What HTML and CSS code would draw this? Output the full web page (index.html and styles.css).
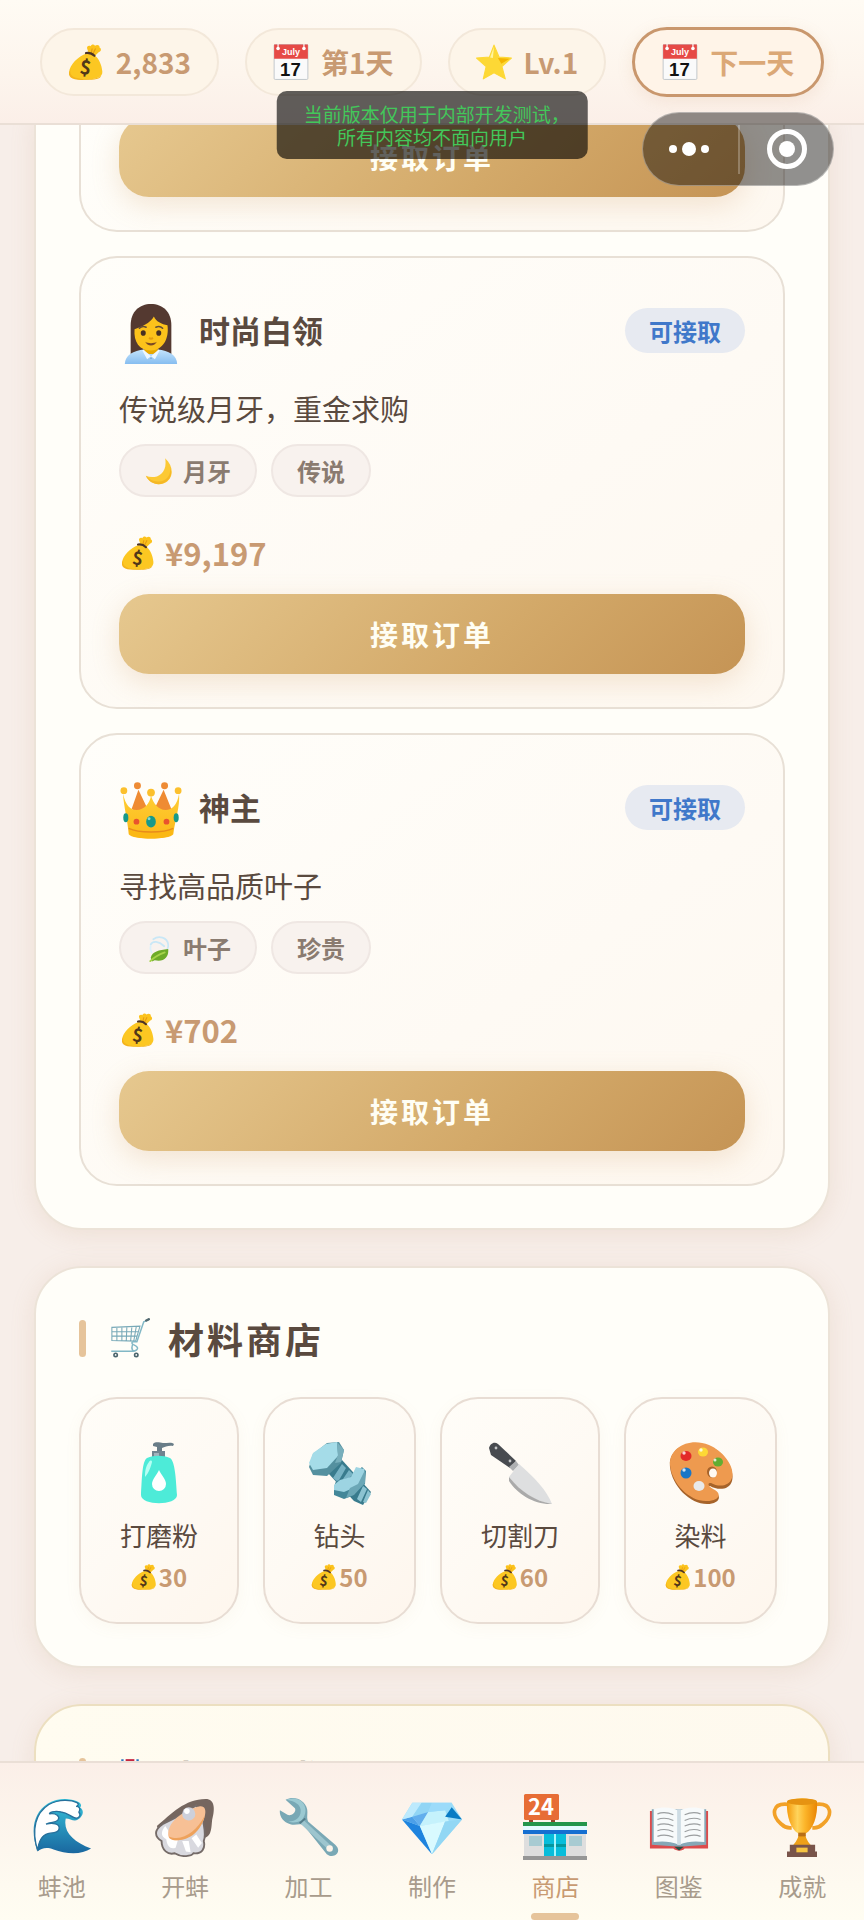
FILE: index.html
```html
<!DOCTYPE html>
<html lang="zh-CN">
<head>
<meta charset="utf-8">
<meta name="viewport" content="width=device-width, initial-scale=1">
<title>材料商店</title>
<link rel="stylesheet" href="styles.css">
</head>
<body>
<svg class="paints" aria-hidden="true">
  <defs>
    <linearGradient id="g-shirt" x1="0" y1="0" x2="0" y2="1"><stop offset="0" stop-color="#c4e4fc"/><stop offset="1" stop-color="#86bdf0"/></linearGradient>
    <linearGradient id="g-wave" x1="0" y1="0" x2="0" y2="1"><stop offset="0" stop-color="#35c4dc"/><stop offset="1" stop-color="#1a679f"/></linearGradient>
    <linearGradient id="g-cup" x1="0" y1="0" x2="1" y2="0"><stop offset="0" stop-color="#f59a0c"/><stop offset=".35" stop-color="#ffd45c"/><stop offset=".6" stop-color="#fcb52a"/><stop offset="1" stop-color="#e98504"/></linearGradient>
    <linearGradient id="g-crown" x1="0" y1="0" x2="0" y2="1"><stop offset="0" stop-color="#ffce35"/><stop offset="1" stop-color="#fbb718"/></linearGradient>
  </defs>
</svg>
<svg class="sprite" aria-hidden="true">
  <symbol id="money" viewBox="0 0 64 64">
    <path d="M37 17l-3-9c-1-4 3-6 6-4 2-4 6-4 8-1 4-3 9-1 8 3 4 2 3 7-1 8l-7 7z" fill="#fcc21b"/>
    <path d="M43 8l-2 9M49 8l-5 10" stroke="#e59a12" stroke-width="2" fill="none"/>
    <path d="M33 17C18 22 3 37 2 50c-1 10 11 13 29 13 20 0 31-4 30-14-1-12-6-24-15-30z" fill="#fcc722"/>
    <path d="M6 41C3 48 2 57 14 60c12 4 39 4 45-4-1 6-11 8-29 8C11 64 0 61 2 50z" fill="#f4b41c"/>
    <path d="M32 16c6-1 11 1 15 5" stroke="#4e3426" stroke-width="4" stroke-linecap="round" fill="none"/>
    <text x="31" y="54" font-size="34" font-weight="700" text-anchor="middle" fill="#513719" transform="rotate(8 31 44)">$</text>
  </symbol>
  <symbol id="calendar" viewBox="0 0 64 64">
    <rect x="2" y="1" width="60" height="62" rx="2" fill="#fafafa" stroke="#b8bfc5" stroke-width="1.5"/>
    <path d="M2 1h60v25H2z" fill="#e64a46"/>
    <circle cx="9" cy="8" r="3.2" fill="#fff"/><circle cx="55" cy="8" r="3.2" fill="#fff"/>
    <path d="M9 7V0M55 7V0" stroke="#fff" stroke-width="2"/>
    <text x="32" y="20" font-size="16" font-weight="700" text-anchor="middle" fill="#fff" class="latin">July</text>
    <text x="31" y="57" font-size="33" font-weight="700" text-anchor="middle" fill="#111" class="latin">17</text>
  </symbol>
  <symbol id="star" viewBox="0 0 64 64">
    <path d="M32 2l9 21 22 2-17 15 6 22-20-11-19 11 5-22L1 25l23-2z" fill="#fdd835" stroke="#fdd835" stroke-width="2" stroke-linejoin="round"/>
    <path d="M32 5l-2 20-5-1z" fill="#fff59d"/><path d="M60 26L45 35l-6-10z" fill="#f4b400"/>
  </symbol>
  <symbol id="woman" viewBox="0 0 64 64">
    <path d="M11 55V23C11 9 20 1 32 1s21 8 21 22v32z" fill="#543930"/>
    <path d="M5 63c0-9 9-14 20-15h14c11 1 20 6 20 15z" fill="url(#g-shirt)"/>
    <path d="M25 45h14v4c-3 5-11 5-14 0z" fill="#e7a800"/>
    <path d="M24 48l8 7-4 3-5-9zm16 0l-8 7 4 3 5-9z" fill="#edf7ff"/>
    <path d="M15 27c7-2 16-6 20-13 2 5 8 8 14 9 2 14-5 26-17 26S14 40 15 27z" fill="#fcc21b"/>
    <path d="M20 26c2-2 5-2 7-1M37 25c2-1 5-1 7 1" stroke="#604c3a" stroke-width="1.6" fill="none" stroke-linecap="round"/>
    <ellipse cx="24" cy="31" rx="2.6" ry="2.9" fill="#483022"/><ellipse cx="40" cy="31" rx="2.6" ry="2.9" fill="#483022"/>
    <path d="M30 36q2 1.600 4 0" stroke="#e39c10" stroke-width="2" fill="none"/>
    <path d="M26 40c3 2 9 2 12 0-2 5-10 5-12 0z" fill="#7b4a25"/>
    <circle cx="32" cy="57" r=".8" fill="#6d9fca"/>
  </symbol>
  <symbol id="crown" viewBox="0 0 64 64">
    <path d="M19 10l-7 20 9 5 8-4zM45 10l8 20-9 5-9-4z" fill="#ef8b32"/>
    <path d="M3 14c3 13 8 17 14 17 8 0 14-7 15-15 2 8 8 15 15 15s12-5 14-17c1 14-4 27-6 42-4 6-42 6-46 0C8 43 4 28 3 14z" fill="url(#g-crown)"/>
    <path d="M9 50c10 5 36 5 46 0l-1 6c-8 6-36 6-44 0z" fill="#fbb814"/><path d="M9 50c10 5 36 5 46 0" stroke="#e88b1b" stroke-width="1.500" fill="none"/>
    <g fill="#fcc02d"><circle cx="4" cy="11" r="3.500"/><circle cx="60" cy="11" r="3.500"/><circle cx="32" cy="13" r="4"/></g>
    <circle cx="18" cy="6" r="3.600" fill="#ee8b35"/><circle cx="46" cy="6" r="3.600" fill="#ee8b35"/>
    <ellipse cx="32" cy="43" rx="5" ry="6" fill="#17998a"/><ellipse cx="6" cy="39" rx="2.600" ry="4.600" fill="#17998a"/><ellipse cx="58" cy="39" rx="2.600" ry="4.600" fill="#17998a"/>
    <circle cx="17" cy="43" r="3" fill="#e9532d"/><circle cx="48" cy="43" r="3" fill="#e9532d"/><circle cx="30" cy="40" r="1.500" fill="#8adacc"/>
  </symbol>
  <symbol id="moon" viewBox="0 0 64 64">
    <path d="M46 3c22 20 19 48-3 57C27 66 10 59 2 43c20 9 51-2 44-40z" fill="#fcc934"/>
    <path d="M57 22c4 18-8 33-25 34-12 1-22-4-30-13 7 16 24 23 40 17 16-7 22-22 15-38z" fill="#f5b825"/>
  </symbol>
  <symbol id="leaf" viewBox="0 0 64 64">
    <path d="M19 12c12-9 32-5 34 12 1 6-1 10-3 13M13 24c5-9 18-8 31 4" stroke="#c9e7f6" stroke-width="4" fill="none" stroke-linecap="round"/>
    <path d="M13 27c-2 6-1 10 2 15" stroke="#dcf0fa" stroke-width="4" fill="none" stroke-linecap="round"/>
    <path d="M13 54c4-15 18-17 40-20 2 17-8 31-31 26l-6 3z" fill="#6dab28"/><path d="M12 62c11-11 22-16 33-20" stroke="#a5d34a" stroke-width="4" fill="none" stroke-linecap="round"/>
  </symbol>
  <symbol id="cart" viewBox="0 0 64 64">
    <g fill="none" stroke="#78a9b8" stroke-width="1.700"><path d="M3 15l45-2-7 24-38-1zM3 22h43M3 29h40M11 15v21M19 15v21M27 14l-1 23M35 14l-2 23M42 14l-4 23"/></g>
    <path d="M62 3l-8 3-11 32c-3 0-8-1-8 2 0 4 10 3 9 9-1 5-8 4-18 4H2M37 41c-3 5-2 9 0 12" fill="none" stroke="#82b8c6" stroke-width="2.400"/>
    <path d="M58 4l4-2" stroke="#526970" stroke-width="4" stroke-linecap="round"/>
    <circle cx="9" cy="59" r="4" fill="#4b646c"/><circle cx="42" cy="59" r="4" fill="#4b646c"/><circle cx="9" cy="59" r="1.400" fill="#fff"/><circle cx="42" cy="59" r="1.400" fill="#fff"/>
  </symbol>
  <symbol id="soap" viewBox="0 0 64 64">
    <path d="M26 3c3-3 7-1 10-1 5 0 9-1 11 1l-1 2c-4-1-8 1-11 2v4h-5V6l-4-1z" fill="#697d88"/><path d="M25 10h13v10H25z" fill="#708490"/><path d="M27 12h5v5h-5z" fill="#a2b3bc"/>
    <path d="M20 17c7-3 16-3 23 0 5 3 6 21 7 37 0 11-36 11-36 0 1-16 1-34 6-37z" fill="#4debd8"/>
    <path d="M22 21c-3 4-4 8-4 15 4-4 6-11 7-15 0-2-2-2-3 0z" fill="#b6fff4"/><path d="M32 29c-2 5-7 9-7 14a7 7 0 0 0 14 0c0-5-5-9-7-14z" fill="#fff"/>
  </symbol>
  <symbol id="bolt" viewBox="0 0 64 64">
    <path d="M20 32l14-13 29 32-8 13-9-4z" fill="#397b8d"/>
    <path d="M25 37l9-14 4 4-8 14zm8 4l8-12 4 4-8 13z" fill="#78b3c4"/>
    <path d="M26 46l2-6 13-3 13-11 4 4-1 13-13 12-8 3-10-4z" fill="#438799"/>
    <path d="M26 44l6-5 11-3 5-10 8 2 1 4-7 13-14 6-10-2z" fill="#9dd4e2"/><path d="M57 29v13L46 54l-8 3 4-10 8-4z" fill="#6ba7b6"/>
    <path d="M49 58l6-13 4 3-6 13zm6 3l5-12 3 4-5 9z" fill="#8cc3d1"/>
    <path d="M1 26l4-13L19 2l12-1 5 8-3 13-14 13-14-1z" fill="#54909f"/><path d="M1 22l4-10L18 3l11-2 1 14-11 12-14 2z" fill="#a5dce8"/><path d="M29 1l7 8-3 12-6 1 3-8z" fill="#78afbc"/>
  </symbol>
  <symbol id="knife" viewBox="0 0 64 64">
    <path d="M1 7c1-4 5-7 9-4l18 17-6 7L3 14z" fill="#484b50"/><path d="M28 20l3 4-6 6-4-4z" fill="#aeb0b2"/>
    <path d="M31 23c17 15 28 27 33 40-15-2-31-11-43-27z" fill="#dedfe0"/><path d="M21 36c12 15 26 24 43 27-17 1-35-10-43-23z" fill="#aaa"/>
    <g fill="#c4c6c8"><circle cx="8" cy="7" r="1.400"/><circle cx="22" cy="20" r="1.400"/></g>
  </symbol>
  <symbol id="palette" viewBox="0 0 64 64">
    <path d="M1 26C-1 8 19-3 40 5c16 6 26 24 23 35-3 10-15 9-22 5-4 0-1 3 5 6 8 5 3 12-8 12C21 63 3 45 1 26z" fill="#a6632a"/>
    <path d="M1 24C0 7 20-4 40 4c16 7 26 23 23 33-3 9-14 9-21 5-5 0-2 4 4 7 8 5 2 11-8 11C22 61 3 44 1 24z" fill="#ee9a4f"/>
    <ellipse cx="43" cy="31" rx="5" ry="5.500" fill="#a6632a"/><ellipse cx="44" cy="32" rx="4" ry="4.500" fill="#fffaf3"/>
    <ellipse cx="17" cy="15" rx="5.500" ry="5" fill="#e32b29"/><ellipse cx="34" cy="11" rx="5" ry="4.500" fill="#fdd835"/><ellipse cx="49" cy="21" rx="5" ry="4.500" fill="#62ad32"/><ellipse cx="17" cy="32" rx="5.500" ry="5.500" fill="#1976c6"/><ellipse cx="30" cy="45" rx="5.500" ry="5" fill="#e9e9e9"/>
    <g fill="#fff" opacity=".8"><circle cx="15" cy="12" r="1.700"/><circle cx="32" cy="9" r="1.700"/><circle cx="46" cy="19" r="1.500"/><circle cx="15" cy="29" r="1.700"/></g>
  </symbol>
  <symbol id="medal" viewBox="0 0 64 64">
    <path d="M18 5h4v24h-4zM42 5h4v24h-4z" fill="#2d77bd"/><path d="M22 5h20v31l-10 5-10-5z" fill="#fff"/><path d="M25 5h14v36H25z" fill="#c62840"/><circle cx="32" cy="48" r="14" fill="#fcc934"/>
  </symbol>
  <symbol id="wave" viewBox="0 0 64 64">
    <path d="M6 58C-2 37 1 17 17 7 27 1 40 1 49 5c4 2 4 5 2 6 5 3 4 9-2 13-4 3-8-1-13-1-3 14 8 25 27 32-10 7-27 6-40 1-8-3-13-1-17 2z" fill="url(#g-wave)"/>
    <path d="M6 57C-1 34 4 17 18 8 29 2 42 3 48 6c3 2 0 4-1 4 4 0 5 3 3 6 3 4-1 8-5 6-5-2-7-5-14-6-7-2-14 1-12 2 7-1 11 3 9 6-2 4-8 2-13 5 8-2 14 0 14 4 0 5-6 5-12 6C9 41 7 49 6 57z" fill="#fff" stroke="#27719c" stroke-width="1.400"/>
  </symbol>
  <symbol id="oyster" viewBox="0 0 64 64">
    <path d="M2 31C17 18 32 2 54 2c10 0 10 11 7 22-1 8 0 19-10 20L35 58 11 54z" fill="#75665f"/>
    <path d="M8 29c-9 6-9 13-1 18 0 10 7 15 14 13 8 5 18 3 20 0 9 1 13-5 11-13 3-8 0-15-1-24L44 9 24 21z" fill="#d9d9df" stroke="#756b68" stroke-width="2"/>
    <path d="M11 31c-5 6-5 11 1 14 1 8 5 11 10 9l3-10-10-7zM29 47l4 11 5 1-2-12zM39 44l7 10 4-5-6-9z" fill="#fff"/>
    <path d="M14 40c0-16 20-27 33-30 6-1 8 3 6 11-4 15-19 26-31 25-5 0-8-2-8-6z" fill="#f7c095"/><path d="M15 42c14 6 29-5 38-22-4 17-17 27-31 26-4 0-7-2-7-4z" fill="#eea25c"/>
    <circle cx="36" cy="18" r="7" fill="#cdd0db"/><circle cx="34" cy="15" r="3" fill="#fff"/>
  </symbol>
  <symbol id="wrench" viewBox="0 0 64 64">
    <path d="M7 3c10-5 21 1 23 10 1 5-1 9 1 13l29 25c8 7-1 16-9 10L27 31c-4-4-9 0-15-2C4 27 0 20 1 14l8 5c4 2 10-3 8-7z" fill="#79a8b5"/>
    <path d="M8 3c10-4 19 1 20 9 1 5-1 9-4 13-5 2-9 3-14 1 9 0 14-5 13-13-1-5-5-8-15-10z" fill="#9bc9d2"/><path d="M25 27l30 28" stroke="#9dc5ce" stroke-width="5"/><path d="M22 28l6-5" stroke="#557d8a" stroke-width="2"/><circle cx="54" cy="55" r="3.500" fill="#fcf3e9"/>
  </symbol>
  <symbol id="diamond" viewBox="0 0 64 64">
    <path d="M11 6h42l11 18-32 37L0 24z" fill="#9bdcf8"/>
    <path d="M0 24l32 37-13-30z" fill="#1e83de"/><path d="M0 24l11-3 8 10z" fill="#4b9fe8"/><path d="M11 6l10 0-10 15-11 3z" fill="#bdeafd"/><path d="M21 6l-10 15 17-5 4-10z" fill="#91d5f5"/><path d="M11 21l17-5-9 15z" fill="#62aeed"/><path d="M28 16l18-2 4 12-31 5z" fill="#c5f2fc"/><path d="M32 6h21l-7 8-18 2z" fill="#9cdbfa"/><path d="M53 11l11 13-18-3z" fill="#087bc4"/><path d="M19 31l27-5-14 35z" fill="#d9faff"/><path d="M46 26l18-2-32 37z" fill="#92d7f4"/>
  </symbol>
  <symbol id="shop" viewBox="0 0 64 66">
    <path d="M6 25h4v4H6zM28 25h4v4h-4z" fill="#8e472c"/><rect x="1" width="35" height="26" rx="1.500" fill="#e76d35"/>
    <path d="M1 39h62v23H1z" fill="#dedede"/><path d="M0 28h64v4H0z" fill="#23964b"/><path d="M0 32h64v4H0z" fill="#e4fbff"/><path d="M0 36h64v4H0z" fill="#156fd1"/>
    <path d="M6 42h13v10H6zM46 42h13v10H46z" fill="#a8cbd2"/><path d="M21 40h22v22H21z" fill="#08bddb"/><path d="M21 50h22v3H21z" fill="#05979e"/><path d="M32 40v22" stroke="#a8f5fc" stroke-width="2"/><path d="M0 62h64v4H0z" fill="#969696"/>
    <text x="18" y="21" font-size="22" font-weight="700" text-anchor="middle" fill="#fff">24</text>
  </symbol>
  <symbol id="book" viewBox="0 0 64 64">
    <path d="M1 15h62v40H38c-2 3-9 3-12 0H1z" fill="#dc4b4c"/><path d="M3 13h58v38L33 53 3 51z" fill="#86a7b6"/>
    <path d="M5 13c10-3 21-2 27 2v36c-9-4-18-4-27-3zM59 13c-10-3-21-2-27 2v36c9-4 18-4 27-3z" fill="#f7fafb"/><path d="M32 13v38" stroke="#cedce4" stroke-width="4"/>
    <path d="M9 18q8-3 17 1M9 24q8-3 17 1M9 30q8-3 17 1M9 36q8-3 17 1M9 42q8-3 17 1M38 19q9-4 17-1M38 25q9-4 17-1M38 31q9-4 17-1M38 37q9-4 17-1M38 43q9-4 17-1" stroke="#9b9ea0" fill="none" stroke-width="1.200"/><path d="M27 53h10l-5 4z" fill="#285044"/>
  </symbol>
  <symbol id="trophy" viewBox="0 0 64 64">
    <path d="M19 8C-1 5-1 20 10 29c5 5 8 4 11 4M45 8c20-3 20 12 9 21-5 5-8 4-11 4" stroke="#f2a128" stroke-width="4" fill="none"/>
    <path d="M29 34h6c0 8 2 12 7 18H22c5-6 7-10 7-18z" fill="#eea019"/><path d="M16 5c8-5 24-5 32 0 1 15-4 29-12 34h-8C20 34 15 20 16 5z" fill="url(#g-cup)"/>
    <ellipse cx="32" cy="5" rx="16" ry="3.500" fill="#e69312"/><path d="M28 38h8v4h-8z" fill="#b86f18"/><path d="M19 51h27v8H19zM16 58h32v6H16z" fill="#79544a"/><path d="M26 54h12v5H26z" fill="#f6c443"/>
  </symbol>
</svg>

<div class="app">
  <header class="topbar">
    <div class="pill"><svg class="i36"><use href="#money"/></svg><span>2,833</span></div>
    <div class="pill"><svg class="i36"><use href="#calendar"/></svg><span>第1天</span></div>
    <div class="pill"><svg class="i36"><use href="#star"/></svg><span>Lv.1</span></div>
    <button class="pill pill-next" type="button"><svg class="i36"><use href="#calendar"/></svg><span>下一天</span></button>
  </header>

  <main class="viewport">
    <div class="feed">
      <section class="card card-continued">
        <article class="order order-continued">
          <button class="accept" type="button">接取订单</button>
        </article>
        <article class="order">
          <div class="order-head"><svg class="avatar"><use href="#woman"/></svg><h3>时尚白领</h3><span class="status">可接取</span></div>
          <p class="desc">传说级月牙，重金求购</p>
          <div class="tags"><span class="tag"><svg class="i28"><use href="#moon"/></svg>月牙</span><span class="tag">传说</span></div>
          <div class="reward"><svg class="i34"><use href="#money"/></svg>¥9,197</div>
          <button class="accept" type="button">接取订单</button>
        </article>
        <article class="order">
          <div class="order-head"><svg class="avatar"><use href="#crown"/></svg><h3>神主</h3><span class="status">可接取</span></div>
          <p class="desc">寻找高品质叶子</p>
          <div class="tags"><span class="tag"><svg class="i28"><use href="#leaf"/></svg>叶子</span><span class="tag">珍贵</span></div>
          <div class="reward"><svg class="i34"><use href="#money"/></svg>¥702</div>
          <button class="accept" type="button">接取订单</button>
        </article>
      </section>

      <section class="card">
        <h2 class="title"><svg class="i40"><use href="#cart"/></svg>材料商店</h2>
        <div class="goods">
          <button class="good" type="button"><svg class="i64"><use href="#soap"/></svg><span class="name">打磨粉</span><span class="cost"><svg class="i26"><use href="#money"/></svg>30</span></button>
          <button class="good" type="button"><svg class="i64"><use href="#bolt"/></svg><span class="name">钻头</span><span class="cost"><svg class="i26"><use href="#money"/></svg>50</span></button>
          <button class="good" type="button"><svg class="i64"><use href="#knife"/></svg><span class="name">切割刀</span><span class="cost"><svg class="i26"><use href="#money"/></svg>60</span></button>
          <button class="good" type="button"><svg class="i64"><use href="#palette"/></svg><span class="name">染料</span><span class="cost"><svg class="i26"><use href="#money"/></svg>100</span></button>
        </div>
      </section>

      <section class="card card-gold">
        <h2 class="title"><svg class="i40"><use href="#medal"/></svg>大师殿堂</h2>
      </section>
    </div>
  </main>

  <nav class="tabbar">
    <a href="#pond" class="tab"><svg class="i60"><use href="#wave"/></svg><span>蚌池</span></a>
    <a href="#open" class="tab"><svg class="i60"><use href="#oyster"/></svg><span>开蚌</span></a>
    <a href="#craft" class="tab"><svg class="i60"><use href="#wrench"/></svg><span>加工</span></a>
    <a href="#make" class="tab"><svg class="i60"><use href="#diamond"/></svg><span>制作</span></a>
    <a href="#store" class="tab active" aria-current="page"><svg class="i60 i-active"><use href="#shop"/></svg><span>商店</span></a>
    <a href="#album" class="tab"><svg class="i60"><use href="#book"/></svg><span>图鉴</span></a>
    <a href="#awards" class="tab"><svg class="i60"><use href="#trophy"/></svg><span>成就</span></a>
  </nav>

  <div class="notice" role="status">当前版本仅用于内部开发测试，<br>所有内容均不面向用户</div>
  <div class="capsule">
    <button class="more" type="button" aria-label="更多"><svg width="44" height="18" viewBox="0 0 44 18" fill="#fff"><circle cx="6" cy="9" r="4"/><circle cx="22" cy="9" r="7"/><circle cx="38" cy="9" r="4"/></svg></button>
    <button class="close" type="button" aria-label="关闭"><svg width="42" height="42" viewBox="0 0 42 42"><circle cx="21" cy="21" r="17.500" fill="none" stroke="#fff" stroke-width="5"/><circle cx="21" cy="21" r="8" fill="#fff"/></svg></button>
  </div>
</div>
</body>
</html>
```
FILE: styles.css
```css
* { box-sizing: border-box; }

body {
  margin: 0;
  font-family: "Noto Sans CJK SC", sans-serif;
  color: #5a4a3f;
  background: #f7eee9;
}

h2, h3, p { margin: 0; }
button { font: inherit; color: inherit; border: 0; background: none; padding: 0; cursor: pointer; }
svg { display: block; flex: none; }
.paints { position: absolute; width: 0; height: 0; }
.sprite { display: none; }
.latin { font-family: "Liberation Sans", sans-serif; }

.i26 { width: 26px; height: 26px; }
.i28 { width: 28px; height: 28px; }
.i34 { width: 34px; height: 34px; }
.i36 { width: 36px; height: 36px; }
.i40 { width: 40px; height: 40px; }
.i60 { width: 60px; height: 60px; }
.i64 { width: 64px; height: 64px; }

.app {
  position: relative;
  display: flex;
  flex-direction: column;
  height: 100vh;
  overflow: hidden;
}

/* Top bar */
.topbar {
  display: flex;
  justify-content: center;
  align-items: center;
  gap: 26px;
  padding: 27px 36px 26px;
  border-bottom: 2px solid #eadfd6;
  background: linear-gradient(#fffbf4, #fdf5ed 60%, #fbefe8);
}

.pill {
  display: flex;
  align-items: center;
  gap: 12px;
  height: 68px;
  padding: 0 26px;
  border: 2px solid #f3e8da;
  border-radius: 34px;
  background: #fdf5e9;
  color: #c89a72;
  font-size: 28px;
  font-weight: 700;
  line-height: 40px;
  white-space: nowrap;
}

.pill-next {
  height: 70px;
  padding: 0 27px;
  border: 3px solid #c9976d;
  border-radius: 35px;
  background: #fff4e8;
  color: #dba877;
  box-shadow: 0 4px 16px rgba(200, 150, 100, .15);
}

/* Content */
.viewport { flex: 1; min-height: 0; overflow: hidden; }
.feed { display: flex; flex-direction: column; gap: 36px; margin-top: -8px; padding: 0 34px; }

.card {
  padding: 42px 43px;
  border: 2px solid #ece3d8;
  border-radius: 48px;
  background: #fffef9;
  box-shadow: 0 4px 24px rgba(190, 150, 110, .16);
}
.card-continued {
  display: flex;
  flex-direction: column;
  gap: 24px;
  padding-top: 0;
  border-top: 0;
  border-radius: 0 0 48px 48px;
}
.card-gold { border-color: #ecdfc0; background: linear-gradient(100deg, #fffcf0, #fef9ee); }

.order {
  padding: 34px 38px 33px;
  border: 2px solid #e8e0d6;
  border-radius: 38px;
  background: linear-gradient(145deg, #fffefa, #fefaf4 60%, #fef8f0);
}
.order-continued { padding-top: 0; border-top: 0; border-radius: 0 0 38px 38px; }

.order-head { display: flex; align-items: center; gap: 16px; height: 76px; }
.order-head h3 { flex: 1; font-size: 31px; font-weight: 700; line-height: 44px; }
.avatar { width: 64px; height: 62px; margin-top: 8px; }

.status {
  padding: 0 24px;
  border-radius: 23px;
  background: #e7eaf1;
  color: #4078ca;
  font-size: 24px;
  font-weight: 700;
  line-height: 45px;
}

.desc { margin-top: 17px; font-size: 29px; line-height: 46px; }

.tags { display: flex; gap: 14px; margin-top: 13px; }
.tag {
  display: flex;
  align-items: center;
  gap: 10px;
  height: 53px;
  padding: 0 24px;
  border: 2px solid #efe7e3;
  border-radius: 27px;
  background: #f8f2ee;
  color: #8a7b70;
  font-size: 24px;
  font-weight: 700;
}

.reward {
  display: flex;
  align-items: center;
  gap: 10px;
  margin-top: 33px;
  padding-left: 2px;
  color: #c89a72;
  font-size: 31px;
  font-weight: 700;
  line-height: 46px;
}

.accept {
  display: block;
  width: 100%;
  height: 80px;
  margin-top: 18px;
  border-radius: 30px;
  background: linear-gradient(135deg, #e6c88f, #d3a969 60%, #c59455);
  box-shadow: 0 8px 28px rgba(205, 155, 95, .24);
  color: #fffef4;
  font-size: 28px;
  font-weight: 700;
  letter-spacing: 3px;
}
.order-continued .accept { margin-top: 0; }

.title {
  display: flex;
  align-items: center;
  height: 56px;
  gap: 18px;
  font-size: 36px;
  font-weight: 700;
  letter-spacing: 3px;
}
.title::before {
  content: "";
  width: 7px;
  height: 37px;
  margin-right: 6px;
  border-radius: 4px;
  background: #e6c49b;
}

.goods { display: flex; gap: 24px; margin-top: 31px; }
.good {
  display: flex;
  flex-direction: column;
  align-items: center;
  min-width: 153px;
  padding: 42px 39px 27px;
  border: 2px solid #e8ddd4;
  border-radius: 38px;
  background: linear-gradient(135deg, #fffdf8, #fefaf4 50%, #fef6ed);
  box-shadow: 0 4px 16px rgba(190, 150, 110, .06);
}
.name { margin-top: 12px; font-size: 26px; line-height: 36px; white-space: nowrap; }
.cost {
  display: flex;
  align-items: center;
  gap: 2px;
  margin-top: 6px;
  color: #c89a72;
  font-size: 24px;
  font-weight: 700;
  line-height: 36px;
}

/* Bottom tabs */
.tabbar {
  display: grid;
  grid-template-columns: repeat(7, 1fr);
  height: 159px;
  border-top: 2px solid #eadfd6;
  background: linear-gradient(#fbefe8, #fdf7ee 55%, #fffdf2);
}
.tab {
  position: relative;
  display: flex;
  flex-direction: column;
  align-items: center;
  gap: 11px;
  padding-top: 34px;
  color: #a89b8c;
  font-size: 24px;
  line-height: 36px;
  text-decoration: none;
}
.active { color: #c89a72; }
.i-active { transform: scale(1.1); }
.active::after {
  content: "";
  position: absolute;
  bottom: 0;
  width: 48px;
  height: 7px;
  border-radius: 4px;
  background: #e6c49b;
}

/* Overlays */
.notice {
  position: absolute;
  top: 91px;
  left: 50%;
  padding: 11px 27px;
  border-radius: 10px;
  background: rgba(0, 0, 0, .62);
  color: #43c75a;
  font-size: 19px;
  line-height: 23px;
  text-align: center;
  white-space: nowrap;
  font-feature-settings: "halt";
  transform: translateX(-50%);
}
.capsule {
  position: absolute;
  top: 112px;
  right: 30px;
  display: grid;
  grid-template-columns: 1fr 1fr;
  align-items: center;
  width: 192px;
  height: 74px;
  border: 1px solid rgba(255, 255, 255, .35);
  border-radius: 37px;
  background: rgba(0, 0, 0, .43);
}
.capsule button { display: grid; place-items: center; height: 49px; }
.capsule .more { padding-right: 4px; }
.capsule .close { border-left: 2px solid rgba(255, 255, 255, .25); }
```
